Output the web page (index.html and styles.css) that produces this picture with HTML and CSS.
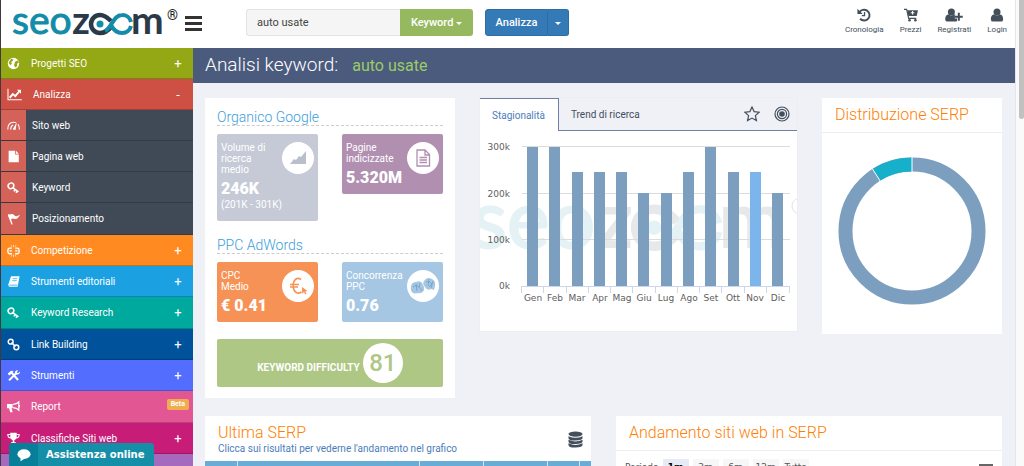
FILE: index.html
```html
<!DOCTYPE html>
<html lang="it">
<head>
<meta charset="utf-8">
<meta name="viewport" content="width=device-width, initial-scale=1">
<title>Analisi keyword: auto usate</title>
<link rel="stylesheet" href="styles.css">
</head>
<body>
<svg class="defs" aria-hidden="true">
  <symbol id="logo" viewBox="0 0 153 48" overflow="visible">
    <text class="logo-thin" x="-1" y="34">seo</text>
    <text class="logo-bold" x="59" y="34">z</text>
    <path d="M98 27C94 32 90 33 87 33A9 9 0 1 1 87 15C91 15 94 17 98 21" fill="none" stroke="#2b3a48" stroke-width="4.500"/>
    <path d="M92 31C99 28 100 15 109 15A9 9 0 0 1 118 22M118 26A9 9 0 0 1 109 33C103 33 100 29 98 25" fill="none" stroke="#128ca9" stroke-width="4"/>
    <circle cx="87" cy="24" r="3.500" fill="#128ca9"/>
    <text class="logo-bold" x="118" y="34">m</text>
  </symbol>
  <symbol id="key" viewBox="0 0 16 16"><path d="M2 8C0 5 3 2 6 2.500S9 7 7 8.500 3 10 2 8zM7.500 8.500l6.500 5M10 10.500l-1.500 2.300M12.500 12.500L11 14.500" fill="none" stroke="currentColor" stroke-width="2"/></symbol>
</svg>
<div class="window">
  <div class="page">
    <header class="top">
      <a class="logo" href="#" aria-label="SEOZoom">
        <svg class="logo-mark" aria-hidden="true"><use href="#logo"/></svg><span class="reg">®</span>
      </a>
      <button class="burger" aria-label="Menu"><i></i><i></i><i></i></button>
      <form class="search">
        <input type="text" value="auto usate" aria-label="Parola chiave">
        <button type="button" class="btn kw">Keyword <i class="caret"></i></button>
        <button type="button" class="btn go">Analizza</button>
        <button type="button" class="btn more" aria-label="Altre opzioni"><i class="caret"></i></button>
      </form>
      <nav class="tools">
        <a href="#"><svg viewBox="0 0 16 16"><path d="M2.500 5.500A6.200 6.200 0 1 1 3.500 12.300" fill="none" stroke="currentColor" stroke-width="2.200"/><path d="M.5.800v6h6z" fill="currentColor"/><path d="M8.600 4.500v4.300H5.500" fill="none" stroke="currentColor" stroke-width="1.500"/></svg>Cronologia</a>
        <a href="#"><svg viewBox="0 0 16 16"><path d="M0 1.500h3l2.300 10.300H14" fill="none" stroke="currentColor" stroke-width="1.300"/><path d="M3.500 2.500H16L14.500 9H5z" fill="currentColor"/><path d="M9.800 3.500v4M7.800 5.500h4" stroke="#fff" stroke-width="1.200"/><circle cx="6.300" cy="14" r="1.500" fill="currentColor"/><circle cx="13" cy="14" r="1.500" fill="currentColor"/></svg>Prezzi</a>
        <a href="#"><svg class="wide" viewBox="0 0 20 16"><circle cx="7" cy="4.500" r="4" fill="currentColor"/><path d="M0 13C0 9 2 7.500 4 7.500q3 2 6 0C12 7.500 14 9 14 13q0 2.500-2.500 2.500h-9Q0 15.500 0 13z" fill="currentColor"/><path d="M15.500 5.500v9M11 10h9" stroke="#fff" stroke-width="4"/><path d="M15.500 5.500v9M11 10h9" stroke="currentColor" stroke-width="2.300"/></svg>Registrati</a>
        <a href="#"><svg viewBox="0 0 16 16"><circle cx="8" cy="4.500" r="4" fill="currentColor"/><path d="M1 13C1 9 3 7.500 5 7.500q3 2 6 0C13 7.500 15 9 15 13q0 2.500-2.500 2.500h-9Q1 15.500 1 13z" fill="currentColor"/></svg>Login</a>
      </nav>
    </header>
    <div class="body">
      <nav class="side">
        <div class="group">
          <a class="row olive" href="#"><svg viewBox="0 0 16 16"><circle cx="8" cy="8" r="7" fill="currentColor"/><path d="M5 2l3 1-1 2-2 1 1 2-2 2-2-3zM9.500 6l4-2 1 3-2 1 0 3-2 2-2-3 1-2z" fill="#93a814"/></svg>Progetti SEO<b>+</b></a>
          <a class="row red" href="#"><svg class="wide" viewBox="0 0 18 16"><path d="M1 1v13.500h17" fill="none" stroke="currentColor" stroke-width="1.300"/><path d="M3 12l4-4.500 3 2.500 5-6" fill="none" stroke="currentColor" stroke-width="2.400"/><path d="M12 2h5v5z" fill="currentColor"/></svg>Analizza<b>-</b></a>
          <a class="row sub" href="#"><span><svg viewBox="0 0 16 16"><path d="M1 13C1 7 4 4 8 4q2 0 3 .8M13.500 6.500Q15.300 9 15.300 13M4.500 13q0-4 3-5.500" fill="none" stroke="currentColor" stroke-width="1.400"/><path d="M7 13l5-9-1.500 9.500z" fill="currentColor"/></svg></span>Sito web</a>
          <a class="row sub" href="#"><span><svg viewBox="0 0 16 16"><path d="M2 1h8v4.500h4.500V15H2zM11 1l3.500 3.500H11z" fill="currentColor"/></svg></span>Pagina web</a>
          <a class="row sub" href="#"><span><svg><use href="#key"/></svg></span>Keyword</a>
          <a class="row sub" href="#"><span><svg viewBox="0 0 16 16"><path d="M1 4l1-1.500L3.500 3Q7 1.500 9 4t7-.5Q13 9.500 9.500 8.500 7 7 5 9l2 6.500H5.500z" fill="currentColor"/></svg></span>Posizionamento</a>
        </div>
        <div class="group">
          <a class="row orange" href="#"><svg viewBox="0 0 16 16"><path d="M6 5H3.500Q1 5 1 8.500T3.500 12H6M10 5h2.500Q15 5 15 8.500T12.500 12H10M3 8.500h3M10 8.500h3" fill="none" stroke="currentColor" stroke-width="1.600"/><path d="M8 1v3M5 1.500l1 2M11 1.500l-1 2M8 13v3M5 15.500l1-2M11 15.500l-1-2" stroke="currentColor" stroke-width=".8"/></svg>Competizione<b>+</b></a>
          <a class="row sky" href="#"><svg viewBox="0 0 16 16"><path d="M5 1.500h10.500L13 14.500H2.500L1.500 12z" fill="currentColor"/><path d="M7 4.500h5.500M6.500 7H12M3 12.500h9.500" stroke="#1ba1e2" stroke-width=".9"/></svg>Strumenti editoriali<b>+</b></a>
          <a class="row teal" href="#"><svg><use href="#key"/></svg>Keyword Research<b>+</b></a>
        </div>
        <div class="group">
          <a class="row navy" href="#"><svg viewBox="0 0 16 16"><circle cx="4.500" cy="4.500" r="3" fill="none" stroke="currentColor" stroke-width="1.800"/><circle cx="11.500" cy="11.500" r="3" fill="none" stroke="currentColor" stroke-width="1.800"/><path d="M5.500 5.500l5 5" stroke="currentColor" stroke-width="1.800"/></svg>Link Building<b>+</b></a>
          <a class="row indigo" href="#"><svg viewBox="0 0 16 16"><path d="M1 5.500L5 2l3 .5-1 1.500 7.500 8.500-1.800 2L5.500 6l-3 2z" fill="currentColor"/><path d="M2.500 14L11 5.500" stroke="currentColor" stroke-width="2.600"/><path d="M13.500 1.500l-1.500 3 2 .5 2-2q.5 4-4 4-3-1-2-4 1.500-2 3.500-1.500z" fill="currentColor"/></svg>Strumenti<b>+</b></a>
          <a class="row pink" href="#"><svg viewBox="0 0 16 16"><path d="M0 5h7v5H5.500L7 15H4L2.500 10H0z" fill="currentColor"/><path d="M7.500 5.500Q12 5 14.500 2.500v10Q12 10 7.500 9.500M15.200 6v3" fill="none" stroke="currentColor" stroke-width="1.500"/></svg>Report<em>Beta</em></a>
        </div>
        <div class="group">
          <a class="row magenta" href="#"><svg viewBox="0 0 16 16"><path d="M4 1h8v5q-.5 3.500-3 4v2.500h2V15H5v-2.500h2V10Q4.500 9.500 4 6z" fill="currentColor"/><path d="M4 3H1q0 4 4 4.500M12 3h3q0 4-4 4.500" fill="none" stroke="currentColor" stroke-width="1.300"/></svg>Classifiche Siti web<b>+</b></a>
          <a class="row purple" href="#" aria-label="Altro"></a>
        </div>
      </nav>
      <main>
        <div class="title"><h1>Analisi keyword:</h1><strong>auto usate</strong></div>
        <div class="cards">
          <section class="card stats">
            <h3>Organico Google</h3>
            <div class="tiles">
              <div class="tile grey">
                <p>Volume di<br>ricerca<br>medio</p><strong>246K</strong><small>(201K - 301K)</small>
                <span class="disc"><svg viewBox="0 0 20 20"><path d="M2 16l4-5 2 1 3-4 2 1 5-6v13z" fill="#b9bfcc"/></svg></span>
              </div>
              <div class="tile plum">
                <p>Pagine<br>indicizzate</p><strong>5.320M</strong>
                <span class="disc"><svg viewBox="0 0 20 20"><path d="M4 2h8l4.500 4.500V18H4zM12 2v5h4.500M6.500 9.500h7.500M6.500 12h7.500M6.500 14.500h7.500" fill="none" stroke="#b18fb1" stroke-width="1.300"/></svg></span>
              </div>
            </div>
            <h3>PPC AdWords</h3>
            <div class="tiles">
              <div class="tile coral">
                <p>CPC<br>Medio</p><strong>€ 0.41</strong>
                <span class="disc"><svg viewBox="0 0 20 20"><path d="M13 3.500Q9 1 6.500 4.500T6 14q3 5 7.500 2M2 8.500h9M2 11h8" fill="none" stroke="#f79256" stroke-width="1.600"/><path d="M14 11l5.500 4-2.300.4 1.200 2.500-1.200.6-1.200-2.500L14.200 18z" fill="#f79256"/></svg></span>
              </div>
              <div class="tile blue">
                <p>Concorrenza<br>PPC</p><strong>0.76</strong>
                <span class="disc"><svg class="gloves" viewBox="0 0 28 20"><g fill="#a5c7e4"><path d="M2 10q1-4 5-4 4-2 6 1l2 4q1 4-3 6l-7 .5Q1 16 2 10zM15 5q3-5 8-2 4 2 3 7l-1 4-3-1q-4 2-6-2-3-3-1-6z"/></g><path d="M4 11q3-3 6 0t3 4M7 8l1 7M11 7l-1 4M17 6q3-2 6 2l-3 3M20 3l-1 7M24 5l-2 7" fill="none" stroke="#6f9fc7" stroke-width=".8"/></svg></span>
              </div>
            </div>
            <div class="difficulty"><span>KEYWORD DIFFICULTY</span><b>81</b></div>
          </section>

          <section class="card chart">
            <div class="tabs">
              <button class="tab on">Stagionalità</button><button class="tab">Trend di ricerca</button>
              <button class="ico" aria-label="Preferiti"><svg viewBox="0 0 16 16"><path d="M8 1l2.100 4.600 5 .6-3.700 3.400 1 5L8 12.100l-4.400 2.500 1-5L.9 6.200l5-.6z" fill="none" stroke="currentColor" stroke-width="1.200"/></svg></button>
              <button class="ico" aria-label="Monitora"><svg viewBox="0 0 16 16"><g fill="none" stroke="currentColor" stroke-width="1.200"><circle cx="8" cy="8" r="7"/><circle cx="8" cy="8" r="4.600"/></g><circle cx="8" cy="8" r="2.800" fill="currentColor"/></svg></button>
            </div>
            <svg class="plot" viewBox="0 0 317 200" role="img" aria-label="Stagionalità mensile">
              <use href="#logo" x="0" y="0" width="153" height="48" opacity=".11" transform="translate(-6 47) scale(2.070)"/>
              <circle cx="320" cy="75" r="8" fill="none" stroke="#e4e4e6"/>
              <path d="M42 15.500h268M42 62.500h268M42 108.500h268" stroke="#dcdcdc"/>
              <g fill="#7c9fc0">
                <rect x="47" y="16" width="11" height="139"/><rect x="69" y="16" width="11" height="139"/><rect x="92" y="41" width="11" height="114"/><rect x="114" y="41" width="11" height="114"/><rect x="136" y="41" width="11" height="114"/><rect x="158" y="62" width="11" height="93"/><rect x="181" y="62" width="11" height="93"/><rect x="203" y="41" width="11" height="114"/><rect x="225" y="16" width="11" height="139"/><rect x="248" y="41" width="11" height="114"/><rect x="292" y="62" width="11" height="93"/>
              </g>
              <rect x="270" y="41" width="11" height="114" fill="#7cb5ec"/>
              <path d="M41 155.500h269M41.500 155v7M63.500 155v7M86.500 155v7M108.500 155v7M130.500 155v7M152.500 155v7M175.500 155v7M197.500 155v7M219.500 155v7M241.500 155v7M264.500 155v7M286.500 155v7M309.500 155v7" stroke="#ccd6eb"/>
              <g text-anchor="end"><text x="30" y="19">300k</text><text x="30" y="66">200k</text><text x="30" y="112">100k</text><text x="30" y="158">0k</text></g>
              <g text-anchor="middle"><text x="53" y="170">Gen</text><text x="75" y="170">Feb</text><text x="97" y="170">Mar</text><text x="120" y="170">Apr</text><text x="142" y="170">Mag</text><text x="164" y="170">Giu</text><text x="186" y="170">Lug</text><text x="209" y="170">Ago</text><text x="231" y="170">Set</text><text x="253" y="170">Ott</text><text x="275" y="170">Nov</text><text x="298" y="170">Dic</text></g>
            </svg>
          </section>

          <section class="card serp">
            <h2>Distribuzione SERP</h2>
            <svg viewBox="0 0 180 201" role="img" aria-label="Distribuzione SERP">
              <circle cx="90" cy="98" r="66.500" fill="none" stroke="#7c9fc0" stroke-width="14"/>
              <path d="M54.270 41.910A66.500 66.500 0 0 1 90 31.500" fill="none" stroke="#16b0cb" stroke-width="14"/>
              <path d="M90 24v15M50.300 35.600l8.200 12.900" stroke="#fff"/>
            </svg>
          </section>
        </div>
        <div class="cards lower">
          <section class="card last">
            <header><div><h2>Ultima SERP</h2><p>Clicca sui risultati per vederne l'andamento nel grafico</p></div>
              <svg viewBox="0 0 16 18"><g fill="#434f5b"><ellipse cx="8" cy="3.200" rx="7.500" ry="2.800"/><path d="M.5 5.500q7.500 3.500 15 0v1.800q0 2.500-7.500 2.700T.5 7.300zM.5 9.300q7.500 3.500 15 0v1.800q0 2.500-7.500 2.700T.5 11.100zM.5 13q7.500 3.500 15 0v1.800q0 2.500-7.500 2.700T.5 14.800z"/></g></svg>
            </header>
            <table><colgroup><col class="c1"><col><col class="c2"><col class="c2"><col class="c1"><col class="c3"></colgroup><thead><tr><th></th><th></th><th></th><th></th><th></th><th></th></tr></thead></table>
          </section>
          <section class="card trend">
            <h2>Andamento siti web in SERP</h2>
            <div class="period"><span>Periodo</span><button class="sel">1m</button><button>3m</button><button>6m</button><button>12m</button><button>Tutto</button><button class="menu" aria-label="Menu del grafico"><i></i><i></i><i></i></button></div>
          </section>
        </div>
      </main>
    </div>
    <button class="chat"><span><svg viewBox="0 0 16 16"><ellipse cx="8" cy="7" rx="7.500" ry="5.500" fill="#fff"/><path d="M4 10v5l5-3z" fill="#fff"/></svg></span>Assistenza online</button>
  </div>
  <div class="track"><i></i></div>
</div>
</body>
</html>
```
FILE: styles.css
```css
* { box-sizing: border-box; }
body { margin: 0; font-family: Roboto, "Liberation Sans", sans-serif; font-size: 10px; color: #434f5b; background: #eff1f7; }
h1, h2, h3, p { margin: 0; font-weight: 400; }
a { color: inherit; text-decoration: none; }
button, input { font: inherit; color: inherit; border: 0; margin: 0; padding: 0; background: none; }
svg { display: block; }
.defs { position: absolute; width: 0; height: 0; }

.window { display: flex; height: 100vh; overflow: hidden; border-left: 1px solid #43383e; }
.page { flex: 1; min-width: 0; overflow: hidden; }
.track { width: 9px; padding-left: 3px; background: #fafafa; border-left: 1px solid #e6e6e8; }
.track i { display: block; height: 123px; margin-top: -4px; border-radius: 4px; background: #c1c1c1; }

.top { display: flex; align-items: flex-start; height: 48px; background: #fff; padding: 0 8px 0 12px; }
.logo { display: flex; }
.logo-mark { width: 153px; height: 48px; overflow: visible; }
.logo-thin, .logo-bold { font-family: Lato, sans-serif; font-size: 39px; }
.logo-thin { fill: #128ca9; stroke: #128ca9; stroke-width: 1px; }
.logo-bold { fill: #2b3a48; font-weight: 700; }
.reg { font-size: 14px; line-height: 14px; font-weight: 500; padding-top: 8px; margin-left: 1px; color: #222; width: 10px; }
.burger { display: grid; gap: 3px; width: 17px; margin: 16px 0 0 8px; }
.burger i { height: 3px; background: #333; }
.search { display: flex; height: 27px; margin: 9px 0 0 44px; font-size: 11px; }
.search input { width: 154px; padding: 0 10px; background: #f5f5f5; border: 1px solid #e3e3e3; border-right: 0; border-radius: 3px 0 0 3px; color: #444; }
.btn { color: #fff; font-weight: 500; }
.kw { width: 73px; background: #96b960; border-radius: 0 3px 3px 0; margin-right: 12px; }
.go { width: 63px; background: #337ab7; border: 1px solid #2e6da4; border-radius: 3px 0 0 3px; }
.more { width: 21px; background: #337ab7; border: 1px solid #2e6da4; border-left: 0; border-radius: 0 3px 3px 0; }
.caret { display: inline-block; vertical-align: middle; border: 3px solid transparent; border-top-color: #fff; border-bottom: 0; }
.tools { display: flex; gap: 16px; margin-left: auto; padding-top: 8px; font-size: 8px; line-height: 10px; }
.tools a { display: grid; justify-items: center; gap: 3px; color: #434f5b; }
.tools svg { width: 14px; height: 14px; }
.tools .wide { width: 18px; }

.body { display: flex; }
.side { width: 192px; flex: none; color: #fff; }
.row { display: flex; align-items: center; height: 31px; padding: 0 10px 0 6px; border-bottom: 1px solid rgba(0, 0, 0, .2); }
.group > :last-child { height: 32px; }
.row svg { width: 13px; height: 13px; margin-right: 11px; flex: none; }
.row .wide { width: 15px; }
.row b { margin-left: auto; width: 10px; text-align: center; font-size: 13px; font-weight: 400; }
.row em { margin: -4px -6px 0 auto; padding: 0 4px; font-style: normal; font-size: 7px; line-height: 11px; font-weight: 700; background: #f0ad4e; border-radius: 2px; }
.sub { background: #404a56; padding-left: 0; }
.sub span { display: flex; align-items: center; align-self: stretch; width: 25px; padding-left: 6px; margin-right: 6px; background: #d56259; }
.olive { background: #93a814; } .red { background: #ce4f43; } .orange { background: #ff8a22; } .sky { background: #1ba1e2; }
.teal { background: #00a99d; } .navy { background: #00529b; } .indigo { background: #536dfe; } .pink { background: #e25693; }
.magenta { background: #c71c77; } .purple { background: #a569bd; }

main { flex: 1; min-width: 0; }
.title { display: flex; align-items: baseline; gap: 14px; height: 35px; padding: 0 12px; line-height: 34px; background: #4b5b7e; color: #fff; }
.title h1 { font-size: 19px; font-weight: 300; }
.title strong { font-size: 16px; font-weight: 400; color: #9ccc65; }
.cards { display: grid; grid-template-columns: 250fr 317fr 180fr; gap: 25px; padding: 15px 13px 18px 12px; align-items: start; }
.lower { grid-template-columns: 1fr 1fr; padding-top: 0; }
.card { background: #fff; min-width: 0; }
.stats { padding: 12px 12px 11px; }
h3 { font-size: 14px; line-height: 15px; font-weight: 300; color: #3c9edc; border-bottom: 1px dashed #ccc; margin-bottom: 8px; }
.tiles { display: grid; grid-template-columns: 1fr 1fr; gap: 24px; align-items: start; margin-bottom: 17px; }
.tile { position: relative; padding: 8px 4px 6px; border-radius: 2px; color: #fff; line-height: 11px; }
.tile strong { display: block; font-size: 16px; line-height: 20px; font-weight: 900; margin-top: 4px; }
.tile small { display: block; font-size: 10px; line-height: 12px; padding-bottom: 4px; }
.disc { position: absolute; right: 4px; top: 8px; display: grid; place-items: center; width: 32px; height: 32px; border-radius: 50%; background: #fff; }
.disc svg { width: 20px; height: 20px; }
.disc .gloves { width: 28px; }
.grey { background: #c5cad6; } .plum { background: #b18fb1; } .coral { background: #f79256; } .blue { background: #a5c7e4; }
.difficulty { display: flex; align-items: baseline; justify-content: center; gap: 3px; padding: 4px; background: #aec785; border-radius: 2px; color: #fff; font-weight: 700; }
.difficulty b { width: 40px; height: 40px; line-height: 40px; border-radius: 50%; background: #fff; color: #aec785; text-align: center; font-size: 24px; font-weight: 500; }

.chart { box-shadow: 0 0 0 1px #eceef3; }
.tabs { display: flex; height: 33px; background: #eff1f7; border-bottom: 1px solid #6d80a8; }
.tab { padding: 0 12px; color: #434f5b; }
.tab.on { height: 33px; background: #fff; border-top: 1px solid #6d80a8; border-right: 1px solid #6d80a8; color: #4a7ebb; padding-right: 13px; }
.ico { width: 16px; margin-right: 7px; }
.tab + .ico { margin-left: auto; margin-right: 14px; }
.ico svg { width: 16px; height: 16px; }
.plot { width: 100%; overflow: hidden; }
.plot g text { font-family: "DejaVu Sans", sans-serif; font-size: 9px; fill: #606060; }

h2 { font-size: 16px; line-height: 20px; font-weight: 300; color: #ff8000; }
.serp h2, .trend h2 { padding: 7px 13px; border-bottom: 1px solid #eee; }
.serp > svg { width: 100%; }
.last header { display: flex; align-items: center; justify-content: space-between; padding: 7px 8px 6px 13px; }
.last header svg { width: 15px; height: 17px; }
.last p { line-height: 13px; color: #4a7ebb; }
.last h2 { line-height: 19px; }
table { width: 100%; table-layout: fixed; border-collapse: collapse; }
th { height: 31px; padding: 0; background: #68acd8; border-left: 1px solid #cfe3f2; }
th:first-child { border-left: 0; }
.c1 { width: 32px; } .c2 { width: 64px; } .c3 { width: 12px; }
.period { display: flex; gap: 4px; padding: 8px 9px; font-family: "DejaVu Sans", sans-serif; font-size: 9px; line-height: 16px; color: #555; }
.period button { width: 26px; background: #f7f7f7; }
.period .sel { background: #e6ebf5; font-weight: 700; color: #000; }
.period .menu { display: grid; gap: 2px; width: 14px; margin: 5px 0 0 auto; background: none; }
.menu i { height: 2px; background: #666; }

.chat { position: fixed; left: 9px; bottom: 0; display: flex; align-items: center; height: 23px; padding-right: 9px; background: #158fa8; border-radius: 3px 3px 0 0; overflow: hidden; color: #fff; font: 700 10px "DejaVu Sans", sans-serif; }
.chat span { display: grid; place-items: center; width: 29px; height: 23px; margin-right: 8px; background: #077f98; }
.chat svg { width: 14px; height: 14px; }
```
